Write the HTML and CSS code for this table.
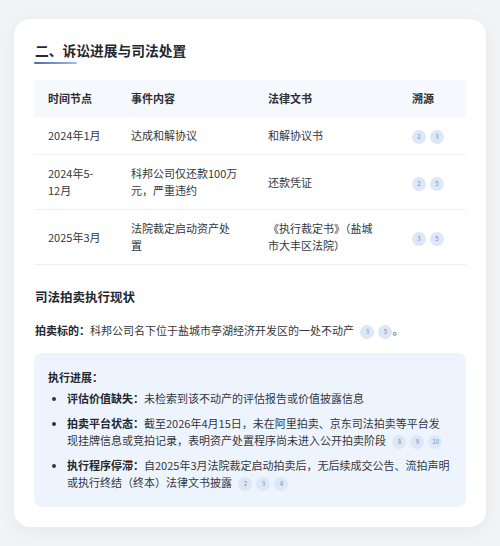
FILE: index.html
```html
<!DOCTYPE html>
<html lang="zh">
<head>
<meta charset="utf-8">
<link rel="stylesheet" href="styles.css">
</head>
<body>
<div class="card">
  <h2 class="title">二、诉讼进展与司法处置</h2>
  <div class="title-bar"></div>
  <table class="tbl">
    <colgroup><col class="w1"><col class="w2"><col class="w3"><col></colgroup>
    <thead>
      <tr><th>时间节点</th><th>事件内容</th><th>法律文书</th><th>溯源</th></tr>
    </thead>
    <tbody>
      <tr><td>2024年1月</td><td>达成和解协议</td><td>和解协议书</td><td><span class="ref">2</span><span class="ref">3</span></td></tr>
      <tr><td>2024年5-<br>12月</td><td>科邦公司仅还款100万<br>元，严重违约</td><td>还款凭证</td><td><span class="ref">2</span><span class="ref">5</span></td></tr>
      <tr><td>2025年3月</td><td>法院裁定启动资产处<br>置</td><td>《执行裁定书》（盐城<br>市大丰区法院）</td><td><span class="ref">3</span><span class="ref">5</span></td></tr>
    </tbody>
  </table>
  <h3 class="sub">司法拍卖执行现状</h3>
  <p class="para"><b>拍卖标的：</b>科邦公司名下位于盐城市亭湖经济开发区的一处不动产 <span class="ref">3</span><span class="ref">5</span>。</p>
  <div class="box">
    <div class="box-title">执行进展：</div>
    <ul class="list">
      <li><b>评估价值缺失：</b>未检索到该不动产的评估报告或价值披露信息</li>
      <li><b>拍卖平台状态：</b>截至2026年4月15日，未在阿里拍卖、京东司法拍卖等平台发<br>现挂牌信息或竞拍记录，表明资产处置程序尚未进入公开拍卖阶段 <span class="ref">8</span><span class="ref">9</span><span class="ref">10</span></li>
      <li><b>执行程序停滞：</b>自2025年3月法院裁定启动拍卖后，无后续成交公告、流拍声明<br>或执行终结（终本）法律文书披露 <span class="ref">2</span><span class="ref">3</span><span class="ref">4</span></li>
    </ul>
  </div>
</div>
</body>
</html>
```

FILE: styles.css
```css
html, body {
  margin: 0;
  padding: 0;
}
body {
  background: #f2f3f5;
  font-family: "Noto Sans CJK SC", "Noto Sans", sans-serif;
  color: #33373d;
  padding: 19px 14px 18px 14px;
}
.card {
  background: #fff;
  border-radius: 16px;
  box-shadow: 0 4px 16px rgba(0,0,0,0.05);
  padding: 21px 20px 20px 20px;
}
.title {
  margin: 0;
  font-size: 13.75px;
  line-height: 20px;
  font-weight: 700;
  color: #24282e;
  padding-left: 1px;
}
.title-bar {
  width: 43px;
  height: 2px;
  margin-top: 2px;
  background: linear-gradient(90deg, #4a6bb0, #a5bce6);
  border-radius: 1px;
}
.tbl {
  width: 100%;
  table-layout: fixed;
  border-collapse: collapse;
  margin-top: 16px;
  font-size: 11px;
  line-height: 17px;
  color: #33373d;
}
.w1 { width: 83px; }
.w2 { width: 137px; }
.w3 { width: 144px; }
.tbl thead tr {
  background: #f5f8fc;
}
.tbl th {
  text-align: left;
  font-weight: 700;
  padding: 10px 0 10px 14px;
  color: #2b2f36;
}
.tbl td {
  padding: 10px 0 10px 14px;
  border-bottom: 1px solid #eef0f3;
  vertical-align: middle;
  white-space: nowrap;
}
.ref {
  display: inline-block;
  width: 14px;
  height: 14px;
  border-radius: 50%;
  background: #dde8f7;
  color: #7089b8;
  font-size: 6px;
  line-height: 14px;
  text-align: center;
  vertical-align: middle;
  margin-left: 4px;
}
.tbl .ref { margin-left: 0; margin-right: 4px; }
.sub {
  margin: 23px 0 0 1px;
  font-size: 12.5px;
  line-height: 18px;
  font-weight: 700;
  color: #24282e;
}
.para {
  margin: 14px 0 0 1px;
  font-size: 11px;
  line-height: 20px;
  color: #33373d;
}
.para b { font-weight: 700; color: #24282e; }
.box {
  margin-top: 13px;
  background: #eef4fd;
  border-radius: 8px;
  padding: 15px 8px 16px 14px;
  font-size: 11px;
  color: #33373d;
}
.box-title {
  font-weight: 700;
  line-height: 18px;
  color: #24282e;
}
.list {
  margin: 0;
  padding-left: 19px;
  line-height: 17px;
}
.list li {
  margin-top: 8px;
  white-space: nowrap;
}
.list li:first-child { margin-top: 4px; }
.list li b { font-weight: 700; color: #24282e; }
```
